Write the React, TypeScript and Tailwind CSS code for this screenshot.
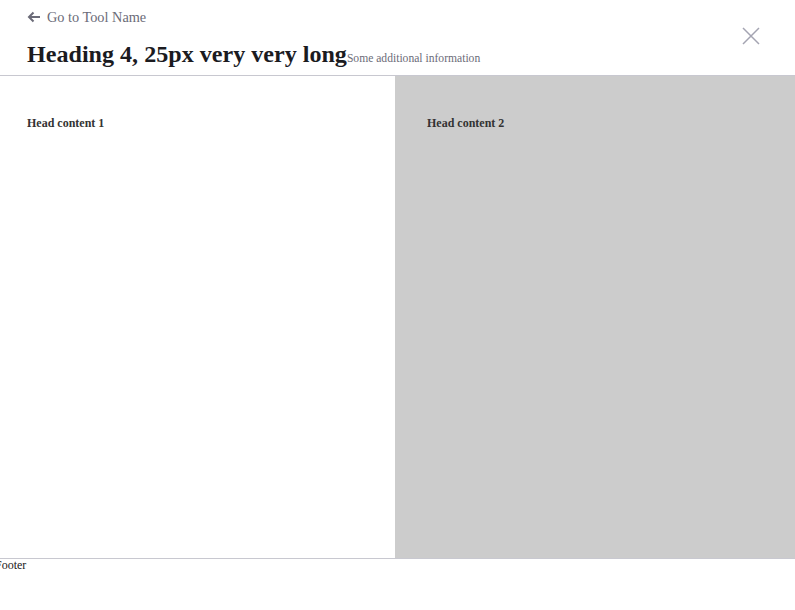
export default function App() {
  return (
    <div className="h-[610px] w-[795px] flex flex-col bg-white font-['Liberation_Serif',serif] overflow-hidden">
      <header className="h-[76px] shrink-0 border-b border-[#c8c8d0] px-[27px] pt-[8px] flex justify-between">
        <div>
          <a className="flex items-center gap-[6px] text-[14.3px] text-[#6b6b78] leading-[18px]">
            <svg width="14" height="12" viewBox="0 0 14 12" fill="none" stroke="#6b6b78" strokeWidth="2">
              <path d="M13 6H2M6.5 1.5 2 6l4.5 4.5" />
            </svg>
            Go to Tool Name
          </a>
          <div className="flex items-baseline mt-[10px]">
            <h4 className="text-[24.1px] font-bold text-[#1b1b1f] leading-[36px]">Heading 4, 25px very very long</h4>
            <span className="text-[11.6px] text-[#6b6b78]">Some additional information</span>
          </div>
        </div>
        <button className="mt-[19px] mr-[8px] h-[18px] w-[18px]">
          <svg width="18" height="18" viewBox="0 0 18 18" stroke="#a4a4b2" strokeWidth="1.5">
            <path d="M1 1l16 16M17 1 1 17" />
          </svg>
        </button>
      </header>
      <main className="flex flex-1">
        <section className="w-[395px] px-[27px] pt-[38px]">
          <h6 className="text-[12px] font-bold text-[#333]">Head content 1</h6>
        </section>
        <section className="flex-1 bg-[#cccccc] px-[32px] pt-[38px]">
          <h6 className="text-[12px] font-bold text-[#333]">Head content 2</h6>
        </section>
      </main>
      <footer className="h-[52px] shrink-0 border-t border-[#c8c8d0]">
        <p className="ml-[-5px] mt-[-3px] text-[12px] text-[#222]">Footer</p>
      </footer>
    </div>
  )
}
